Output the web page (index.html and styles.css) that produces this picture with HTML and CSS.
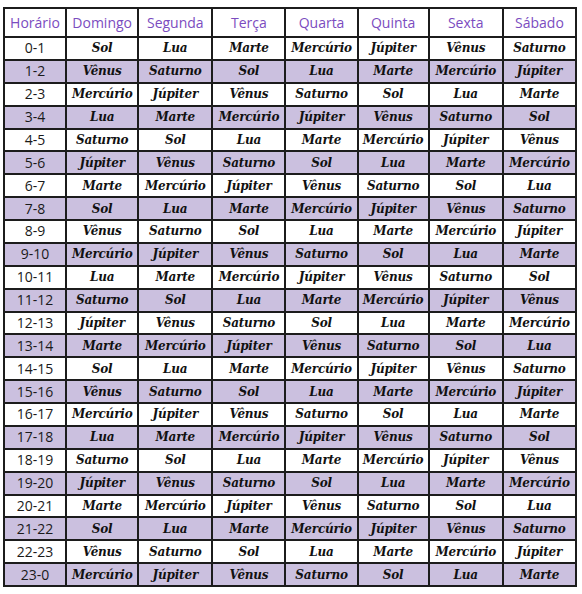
FILE: index.html
```html
<!DOCTYPE html>
<html lang="pt">
<head>
<meta charset="utf-8">
<title>Horas planetárias</title>
<link rel="stylesheet" href="styles.css">
</head>
<body>
<table class="hours">
<colgroup>
<col class="c-time"><col class="c-dom"><col class="c-seg"><col class="c-ter"><col class="c-qua"><col class="c-qui"><col class="c-sex"><col class="c-sab">
</colgroup>
<thead>
<tr><th>Horário</th><th>Domingo</th><th>Segunda</th><th>Terça</th><th>Quarta</th><th>Quinta</th><th>Sexta</th><th>Sábado</th></tr>
</thead>
<tbody>
<tr><td class="t">0-1</td><td>Sol</td><td>Lua</td><td>Marte</td><td>Mercúrio</td><td>Júpiter</td><td>Vênus</td><td>Saturno</td></tr>
<tr class="alt"><td class="t">1-2</td><td>Vênus</td><td>Saturno</td><td>Sol</td><td>Lua</td><td>Marte</td><td>Mercúrio</td><td>Júpiter</td></tr>
<tr><td class="t">2-3</td><td>Mercúrio</td><td>Júpiter</td><td>Vênus</td><td>Saturno</td><td>Sol</td><td>Lua</td><td>Marte</td></tr>
<tr class="alt"><td class="t">3-4</td><td>Lua</td><td>Marte</td><td>Mercúrio</td><td>Júpiter</td><td>Vênus</td><td>Saturno</td><td>Sol</td></tr>
<tr><td class="t">4-5</td><td>Saturno</td><td>Sol</td><td>Lua</td><td>Marte</td><td>Mercúrio</td><td>Júpiter</td><td>Vênus</td></tr>
<tr class="alt"><td class="t">5-6</td><td>Júpiter</td><td>Vênus</td><td>Saturno</td><td>Sol</td><td>Lua</td><td>Marte</td><td>Mercúrio</td></tr>
<tr><td class="t">6-7</td><td>Marte</td><td>Mercúrio</td><td>Júpiter</td><td>Vênus</td><td>Saturno</td><td>Sol</td><td>Lua</td></tr>
<tr class="alt"><td class="t">7-8</td><td>Sol</td><td>Lua</td><td>Marte</td><td>Mercúrio</td><td>Júpiter</td><td>Vênus</td><td>Saturno</td></tr>
<tr><td class="t">8-9</td><td>Vênus</td><td>Saturno</td><td>Sol</td><td>Lua</td><td>Marte</td><td>Mercúrio</td><td>Júpiter</td></tr>
<tr class="alt"><td class="t">9-10</td><td>Mercúrio</td><td>Júpiter</td><td>Vênus</td><td>Saturno</td><td>Sol</td><td>Lua</td><td>Marte</td></tr>
<tr><td class="t">10-11</td><td>Lua</td><td>Marte</td><td>Mercúrio</td><td>Júpiter</td><td>Vênus</td><td>Saturno</td><td>Sol</td></tr>
<tr class="alt"><td class="t">11-12</td><td>Saturno</td><td>Sol</td><td>Lua</td><td>Marte</td><td>Mercúrio</td><td>Júpiter</td><td>Vênus</td></tr>
<tr><td class="t">12-13</td><td>Júpiter</td><td>Vênus</td><td>Saturno</td><td>Sol</td><td>Lua</td><td>Marte</td><td>Mercúrio</td></tr>
<tr class="alt"><td class="t">13-14</td><td>Marte</td><td>Mercúrio</td><td>Júpiter</td><td>Vênus</td><td>Saturno</td><td>Sol</td><td>Lua</td></tr>
<tr><td class="t">14-15</td><td>Sol</td><td>Lua</td><td>Marte</td><td>Mercúrio</td><td>Júpiter</td><td>Vênus</td><td>Saturno</td></tr>
<tr class="alt"><td class="t">15-16</td><td>Vênus</td><td>Saturno</td><td>Sol</td><td>Lua</td><td>Marte</td><td>Mercúrio</td><td>Júpiter</td></tr>
<tr><td class="t">16-17</td><td>Mercúrio</td><td>Júpiter</td><td>Vênus</td><td>Saturno</td><td>Sol</td><td>Lua</td><td>Marte</td></tr>
<tr class="alt"><td class="t">17-18</td><td>Lua</td><td>Marte</td><td>Mercúrio</td><td>Júpiter</td><td>Vênus</td><td>Saturno</td><td>Sol</td></tr>
<tr><td class="t">18-19</td><td>Saturno</td><td>Sol</td><td>Lua</td><td>Marte</td><td>Mercúrio</td><td>Júpiter</td><td>Vênus</td></tr>
<tr class="alt"><td class="t">19-20</td><td>Júpiter</td><td>Vênus</td><td>Saturno</td><td>Sol</td><td>Lua</td><td>Marte</td><td>Mercúrio</td></tr>
<tr><td class="t">20-21</td><td>Marte</td><td>Mercúrio</td><td>Júpiter</td><td>Vênus</td><td>Saturno</td><td>Sol</td><td>Lua</td></tr>
<tr class="alt"><td class="t">21-22</td><td>Sol</td><td>Lua</td><td>Marte</td><td>Mercúrio</td><td>Júpiter</td><td>Vênus</td><td>Saturno</td></tr>
<tr><td class="t">22-23</td><td>Vênus</td><td>Saturno</td><td>Sol</td><td>Lua</td><td>Marte</td><td>Mercúrio</td><td>Júpiter</td></tr>
<tr class="alt"><td class="t">23-0</td><td>Mercúrio</td><td>Júpiter</td><td>Vênus</td><td>Saturno</td><td>Sol</td><td>Lua</td><td>Marte</td></tr>
</tbody>
</table>
</body>
</html>
```
FILE: styles.css
```css
html, body {
  margin: 0;
  background: #ffffff;
}
body {
  padding: 7px 0 0 3px;
}
.hours {
  border-collapse: collapse;
  table-layout: fixed;
  width: 574px;
  border: 2px solid #1c1c1c;
}
.c-time { width: 62px; }
.c-dom { width: 72px; }
.c-seg { width: 74px; }
.c-ter { width: 73px; }
.c-qua { width: 72px; }
.c-qui { width: 71px; }
.c-sex { width: 74px; }
.c-sab { width: 73px; }
.hours th,
.hours td {
  border: 2px solid #1c1c1c;
  padding: 0;
  text-align: center;
  white-space: nowrap;
  overflow: hidden;
}
.hours th {
  height: 27px;
  font-family: "Open Sans", "Noto Sans", sans-serif;
  font-weight: 400;
  font-size: 14px;
  color: #7b4cc0;
}
.hours tbody tr {
  height: 22.875px;
}
.hours td {
  height: 20.875px;
  line-height: 16px;
  font-family: "DejaVu Serif", serif;
  font-style: italic;
  font-weight: 700;
  font-size: 12px;
  color: #111111;
  letter-spacing: -0.2px;
}
.hours td.t {
  font-family: "Open Sans", "Noto Sans", sans-serif;
  font-style: normal;
  font-weight: 500;
  font-size: 14px;
  letter-spacing: 0;
  color: #1a1a1a;
}
.hours tr.alt td {
  background: #cbc0df;
}
```
